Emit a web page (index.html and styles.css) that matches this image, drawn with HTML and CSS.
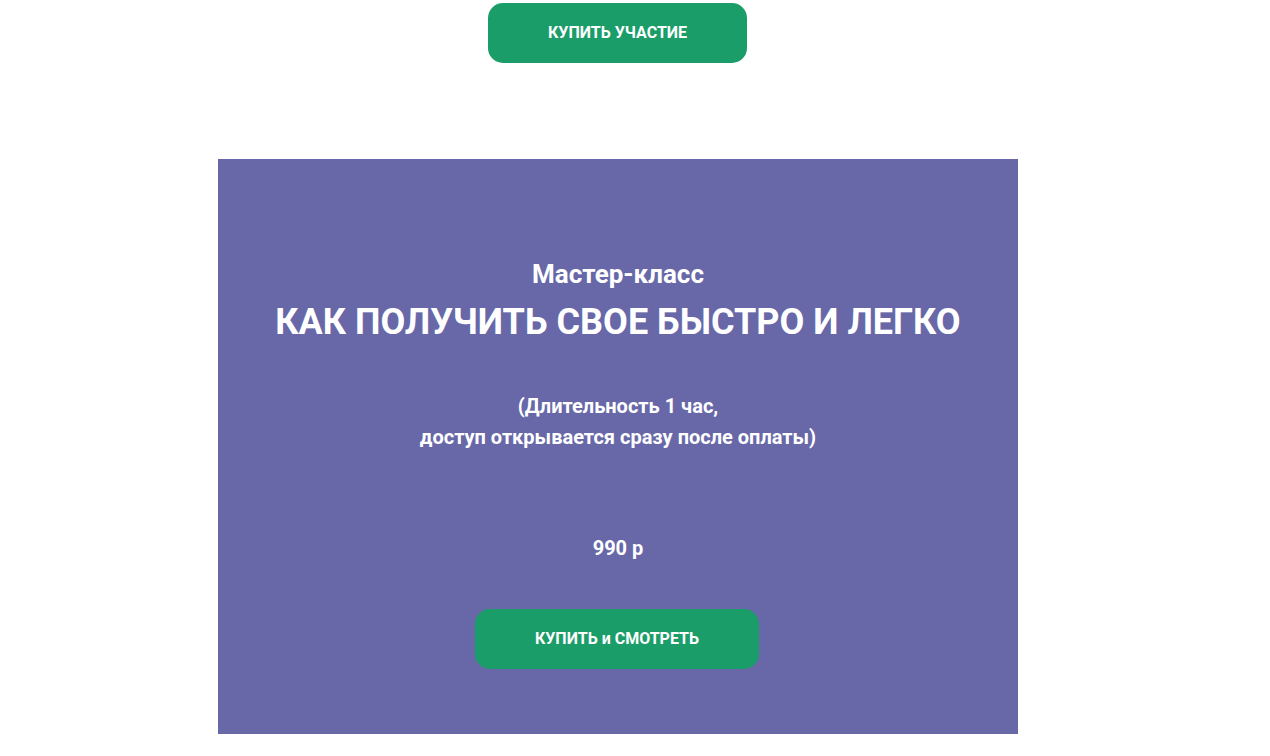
FILE: index.html
```html
<!DOCTYPE html>
<html lang="ru">
<head>
<meta charset="utf-8">
<link rel="stylesheet" href="styles.css">
</head>
<body>
<div class="page">
  <div class="top">
    <a class="btn btn-top">КУПИТЬ УЧАСТИЕ</a>
  </div>
  <section class="card">
    <div class="kicker">Мастер-класс</div>
    <h1 class="title">КАК ПОЛУЧИТЬ СВОЕ БЫСТРО И ЛЕГКО</h1>
    <p class="note">(Длительность 1 час,<br>доступ открывается сразу после оплаты)</p>
    <div class="price">990 р</div>
    <a class="btn btn-buy">КУПИТЬ и СМОТРЕТЬ</a>
  </section>
</div>
</body>
</html>
```
FILE: styles.css
```css
html, body {
  margin: 0;
  padding: 0;
  background: #ffffff;
}
body {
  font-family: Roboto, "Liberation Sans", Arial, sans-serif;
  overflow: hidden;
  height: 756px;
}
.page {
  width: 1236px;
}
.top {
  display: flex;
  justify-content: center;
  padding-top: 3px;
  padding-right: 1px;
}
.btn {
  display: flex;
  align-items: center;
  justify-content: center;
  background: #1a9d69;
  color: #ffffff;
  font-weight: 700;
  font-size: 16px;
  border-radius: 15px;
  height: 60px;
  padding-bottom: 1px;
  box-sizing: border-box;
  text-decoration: none;
}
.btn-top {
  width: 259px;
}
.card {
  margin: 96px 218px 0;
  width: 800px;
  height: 575px;
  background: #6868a9;
  color: #ffffff;
  display: flex;
  flex-direction: column;
  align-items: center;
  text-align: center;
  padding-top: 100px;
  box-sizing: border-box;
}
.kicker {
  font-size: 26px;
  font-weight: 700;
  line-height: 30px;
}
.title {
  margin: 13px 0 0;
  font-size: 36px;
  font-weight: 700;
  line-height: 40px;
}
.note {
  margin: 49px 0 0;
  font-size: 20px;
  font-weight: 700;
  line-height: 31px;
}
.price {
  margin-top: 83px;
  font-size: 20px;
  font-weight: 700;
  line-height: 24px;
}
.btn-buy {
  margin-top: 49px;
  margin-right: 2px;
  width: 284px;
}
```
